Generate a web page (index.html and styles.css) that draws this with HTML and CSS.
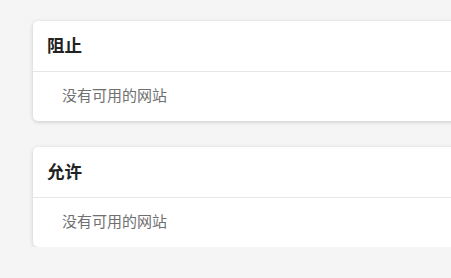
FILE: index.html
```html
<!DOCTYPE html>
<html lang="zh-CN">
<head>
  <meta charset="UTF-8">
  <meta name="viewport" content="width=device-width, initial-scale=1.0">
  <title>网站列表</title>
  <link rel="stylesheet" href="styles.css">
</head>
<body>
  <div class="list">
    <section class="card">
      <h2 class="card-title">阻止</h2>
      <div class="card-body">
        <p class="empty">没有可用的网站</p>
      </div>
    </section>

    <section class="card">
      <h2 class="card-title">允许</h2>
      <div class="card-body">
        <p class="empty">没有可用的网站</p>
      </div>
    </section>
  </div>
</body>
</html>
```

FILE: styles.css
```css
/* Page */
html {
  overflow: hidden;
}

body {
  font-family: "Noto Sans CJK SC", "Noto Sans", sans-serif;
  background-color: #f5f5f5;
  margin: 0;
  padding: 21px 0 0 33px;
}

.list {
  display: flex;
  flex-direction: column;
  gap: 26px;
  width: 520px;
}

/* Card */
.card {
  background: #fff;
  border-radius: 5px;
  box-shadow: 0 1px 4px rgba(0, 0, 0, 0.18);
}

.card-title {
  margin: 0;
  height: 50px;
  line-height: 48px;
  padding-left: 14px;
  font-size: 17.5px;
  font-weight: bold;
  color: #222;
  border-bottom: 1px solid #e6e6e6;
}

.card-body {
  height: 49px;
  display: flex;
  align-items: center;
  padding: 0 0 4px 29px;
  box-sizing: border-box;
}

.empty {
  margin: 0;
  font-size: 15px;
  color: #707070;
}
```
